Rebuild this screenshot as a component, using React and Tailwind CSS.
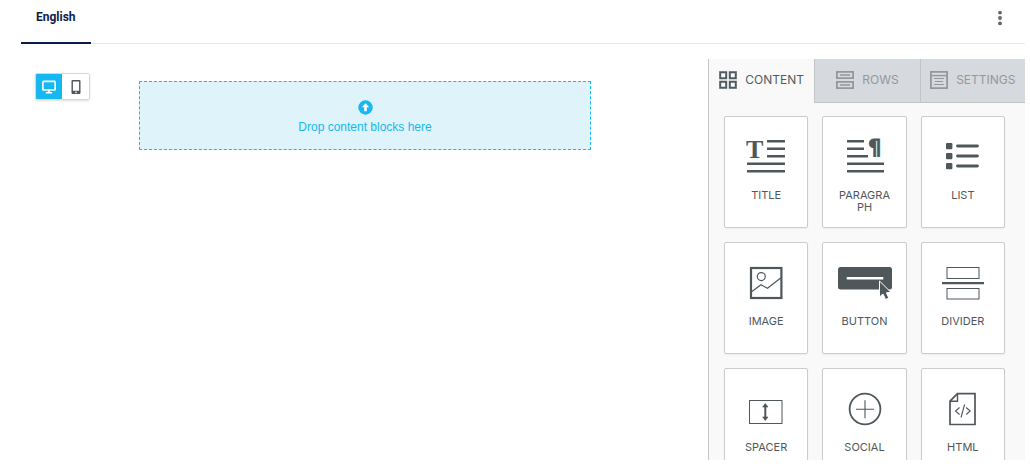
import { useState } from "react";

const TitleIcon = () => (
    <svg width="56" height="36" viewBox="0 0 56 36" fill="none" stroke="currentColor" strokeWidth="2.4" className="overflow-visible" aria-hidden="true">
        <text x="8" y="18.5" fontSize="26" fill="currentColor" stroke="none" className="font-['Liberation_Serif',serif] font-bold">T</text>
        <path d="M29 2.2H47M29 9.7H47M29 17.2H47M9 24.7H47M9 32.2H47" />
    </svg>
);

const ParagraphIcon = () => (
    <svg width="56" height="36" viewBox="0 0 56 36" fill="none" stroke="currentColor" strokeWidth="2.4" className="overflow-visible" aria-hidden="true">
        <text x="31" y="16" fontSize="21" fill="currentColor" stroke="currentColor" strokeWidth="0.8" className="font-['DejaVu_Sans',sans-serif] font-bold">¶</text>
        <path d="M10 2.2H27M10 9.7H27M10 17.2H31M10 24.7H47M10 32.2H47" />
    </svg>
);

const ListIcon = () => (
    <svg width="56" height="36" viewBox="0 0 56 36" fill="currentColor" aria-hidden="true">
        <rect x="11" y="4" width="6.4" height="6.2" rx="1" />
        <rect x="11" y="14" width="6.4" height="6.2" rx="1" />
        <rect x="11" y="24" width="6.4" height="6.2" rx="1" />
        <path d="M22.5 7H42.5M22.5 17H42.5M22.5 27H42.5" stroke="currentColor" strokeWidth="2.8" strokeLinecap="round" />
    </svg>
);

const ImageIcon = () => (
    <svg width="56" height="36" viewBox="0 0 56 36" fill="none" stroke="currentColor" aria-hidden="true">
        <rect x="13" y="3" width="30.4" height="30" strokeWidth="2.2" />
        <circle cx="23.3" cy="11.6" r="4" strokeWidth="1.2" />
        <path d="M14 26.5L23 19.8L29.5 23.2L43 12.8" strokeWidth="1.2" />
    </svg>
);

const ButtonIcon = () => (
    <svg width="56" height="36" viewBox="0 0 56 36" fill="currentColor" aria-hidden="true">
        <rect x="1" y="2" width="54" height="22.5" rx="2.5" />
        <path d="M9.7 13.3H46.3" stroke="white" strokeWidth="2.6" />
        <path d="M42.5 16V32L46 29L48.6 34.6L51.8 33L49.4 27.8L54 27.4Z" stroke="white" strokeWidth="1" />
    </svg>
);

const DividerIcon = () => (
    <svg width="56" height="36" viewBox="0 0 56 36" fill="none" stroke="currentColor" aria-hidden="true">
        <rect x="12" y="2.5" width="32" height="11" />
        <path d="M7 18.2H49" strokeWidth="2.2" />
        <rect x="12" y="23.5" width="32" height="10.5" />
    </svg>
);

const SpacerIcon = () => (
    <svg width="56" height="36" viewBox="0 0 56 36" fill="none" stroke="currentColor" aria-hidden="true">
        <rect x="11.5" y="9.5" width="32.5" height="23" />
        <path d="M27.3 15V27" strokeWidth="2" />
        <path d="M27.3 12.5L30 16H24.6ZM27.3 29.5L30 26H24.6Z" fill="currentColor" strokeWidth="0.6" strokeLinejoin="round" />
    </svg>
);

const SocialIcon = () => (
    <svg width="56" height="36" viewBox="0 0 56 36" fill="none" stroke="currentColor" aria-hidden="true">
        <circle cx="28" cy="18" r="15.4" strokeWidth="1.8" />
        <path d="M19 18.2H37M28 9.2V27.2" strokeWidth="1.1" />
    </svg>
);

const HtmlIcon = () => (
    <svg width="56" height="36" viewBox="0 0 56 36" fill="none" stroke="currentColor" aria-hidden="true">
        <path d="M22.5 2.7H40V33.5H15V10.2Z" strokeWidth="1.7" />
        <path d="M22.5 2.7V10.2H15" strokeWidth="1.4" />
        <path d="M24.5 16.5L20.5 20L24.5 23.5M31.2 16.5L35.2 20L31.2 23.5M29.6 13.5L26 26.5" strokeWidth="1.1" />
    </svg>
);

const ContentIcon = () => (
    <svg width="18" height="18" viewBox="0 0 18 18" fill="none" stroke="currentColor" strokeWidth="2" aria-hidden="true">
        <path d="M1.2 1.2H7.2V7.2H1.2ZM10.8 1.2H16.8V7.2H10.8ZM1.2 10.8H7.2V16.8H1.2ZM10.8 10.8H16.8V16.8H10.8Z" />
    </svg>
);

const RowsIcon = () => (
    <svg width="18" height="18" viewBox="0 0 18 18" fill="none" stroke="currentColor" strokeWidth="1.8" aria-hidden="true">
        <path d="M0.9 0.9H17.1V7.2H0.9ZM0.9 10.8H17.1V17.1H0.9Z" />
        <path d="M4 4H14M4 14H14" strokeWidth="1.4" />
    </svg>
);

const SettingsIcon = () => (
    <svg width="18" height="18" viewBox="0 0 18 18" fill="none" stroke="currentColor" strokeWidth="1.8" aria-hidden="true">
        <path d="M0.9 0.9H17.1V17.1H0.9Z" />
        <path d="M0.9 4.6H17.1" strokeWidth="1.4" />
        <path d="M4 7.5H14M5 10.5H13M4 13.5H14" strokeWidth="1" />
    </svg>
);

const tabs = [
    { id: "content", label: "CONTENT", icon: ContentIcon },
    { id: "rows", label: "ROWS", icon: RowsIcon },
    { id: "settings", label: "SETTINGS", icon: SettingsIcon },
];

const blocks = [
    { label: "TITLE", icon: TitleIcon },
    { label: "PARAGRAPH", icon: ParagraphIcon },
    { label: "LIST", icon: ListIcon },
    { label: "IMAGE", icon: ImageIcon },
    { label: "BUTTON", icon: ButtonIcon },
    { label: "DIVIDER", icon: DividerIcon },
    { label: "SPACER", icon: SpacerIcon },
    { label: "SOCIAL", icon: SocialIcon },
    { label: "HTML", icon: HtmlIcon },
];

const DeviceToggle = ({ device, setDevice }) => (
    <div className="flex h-[27px] w-[55px] shrink-0 border border-[#d8d8d8] rounded-xs shadow-sm overflow-hidden">
        <button
            type="button"
            aria-label="Desktop preview"
            aria-pressed={device === "desktop"}
            onClick={() => setDevice("desktop")}
            className={`flex w-[26px] items-center justify-center ${device === "desktop" ? "bg-[#15b8f0] text-white" : "bg-white text-[#505659]"}`}
        >
            <svg width="14" height="14" viewBox="0 0 14 14" fill="none" stroke="currentColor" strokeWidth="1.6" aria-hidden="true">
                <rect x="0.9" y="1.4" width="12.2" height="8.6" rx="0.6" />
                <path d="M7 10V12.4M3.8 12.8H10.2" />
            </svg>
        </button>
        <button
            type="button"
            aria-label="Mobile preview"
            aria-pressed={device === "mobile"}
            onClick={() => setDevice("mobile")}
            className={`flex flex-1 items-center justify-center ${device === "mobile" ? "bg-[#15b8f0] text-white" : "bg-white text-[#505659]"}`}
        >
            <svg width="10" height="14" viewBox="0 0 10 14" fill="currentColor" aria-hidden="true">
                <path fillRule="evenodd" d="M1.6 0H8.4Q9.5 0 9.5 1.1V12.9Q9.5 14 8.4 14H1.6Q0.5 14 0.5 12.9V1.1Q0.5 0 1.6 0ZM1.9 1.6V10.8H8.1V1.6ZM5 11.6A0.8 0.8 0 1 0 5 13.2A0.8 0.8 0 1 0 5 11.6Z" />
            </svg>
        </button>
    </div>
);

const BlockCard = ({ label, icon: Icon }) => (
    <button
        type="button"
        draggable
        className="flex h-28 flex-col items-center bg-white border border-[#cccccc] rounded-xs shadow-xs px-[14px] pt-[22px] text-[#4f575b] cursor-grab"
    >
        <Icon />
        <span className="mt-[14px] w-full break-all text-center text-[11px] leading-3">{label}</span>
    </button>
);

const App = () => {
    const [device, setDevice] = useState("desktop");
    const [activeTab, setActiveTab] = useState("content");

    return (
        <div className="flex h-screen flex-col bg-white pl-[21px] pr-[5px] pb-[6px] font-[Inter,sans-serif]">
            {/* Language tabs */}
            <header className="flex h-11 shrink-0 justify-between border-b border-[#e6e6e6]">
                <button
                    type="button"
                    className="-mb-px border-b-2 border-[#0b1c4a] px-[15px] pb-[9px] font-[Roboto,sans-serif] text-xs font-bold text-[#0b1c4a]"
                >
                    English
                </button>
                <button type="button" aria-label="More options" className="flex w-6 items-center justify-center pb-2 mr-[13px] text-[#666666]">
                    <svg width="4" height="16" viewBox="0 0 4 16" fill="currentColor" aria-hidden="true">
                        <circle cx="2" cy="2.6" r="1.9" />
                        <circle cx="2" cy="8" r="1.9" />
                        <circle cx="2" cy="13.4" r="1.9" />
                    </svg>
                </button>
            </header>

            <div className="flex min-h-0 flex-1 pt-[15px]">
                {/* Canvas */}
                <main className="flex min-w-0 flex-1 items-start gap-[49px] pl-[14px] pr-[117px] pt-[14px]">
                    <DeviceToggle device={device} setDevice={setDevice} />
                    <div className="mt-2 flex flex-1 flex-col items-center border border-dashed border-[#15b8f0] bg-[#dff3fa] pt-[18px] pb-[14px] text-[#15b8f0]">
                        <svg width="15" height="15" viewBox="0 0 15 15" aria-hidden="true">
                            <circle cx="7.5" cy="7.5" r="7.2" fill="currentColor" />
                            <path d="M7.5 3.2L11.2 7.2H8.8V11.2H6.2V7.2H3.8Z" fill="white" />
                        </svg>
                        <p className="mt-1 font-['Liberation_Sans',sans-serif] text-xs">Drop content blocks here</p>
                    </div>
                </main>

                {/* Side panel */}
                <aside className="w-[317px] shrink-0 overflow-hidden border-l border-[#c4c4c4] bg-[#f9f9f9]">
                    <div role="tablist" className="grid grid-cols-3">
                        {tabs.map(({ id, label, icon: Icon }) => (
                            <button
                                key={id}
                                type="button"
                                role="tab"
                                aria-selected={activeTab === id}
                                onClick={() => setActiveTab(id)}
                                className={`flex h-11 items-center justify-center gap-2 border-b pb-px text-xs ${
                                    activeTab === id
                                        ? "border-transparent text-[#505c62]"
                                        : "border-l border-[#c4c4c4] bg-[#d6d9dd] text-[#94989b]"
                                }`}
                            >
                                <Icon />
                                {label}
                            </button>
                        ))}
                    </div>
                    <div className="grid grid-cols-3 gap-[14px] pl-[15px] pr-5 pt-[13px]">
                        {blocks.map((block) => (
                            <BlockCard key={block.label} {...block} />
                        ))}
                    </div>
                </aside>
            </div>
        </div>
    );
};

export default App;
